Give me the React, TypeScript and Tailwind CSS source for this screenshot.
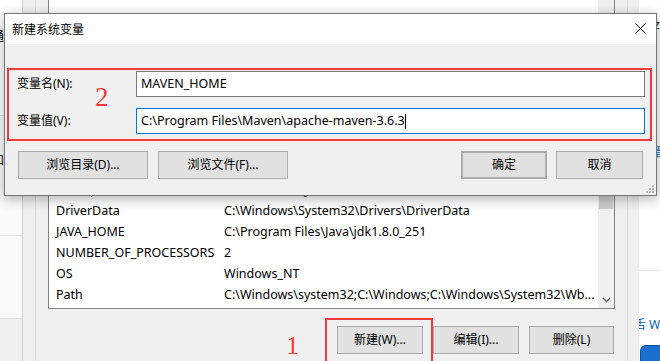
const rows = [
  ['ComSpec', 'C:\\Windows\\system32\\cmd.exe'],
  ['DriverData', 'C:\\Windows\\System32\\Drivers\\DriverData'],
  ['JAVA_HOME', 'C:\\Program Files\\Java\\jdk1.8.0_251'],
  ['NUMBER_OF_PROCESSORS', '2'],
  ['OS', 'Windows_NT'],
  ['Path', 'C:\\Windows\\system32;C:\\Windows;C:\\Windows\\System32\\Wb...'],
]

const font = "font-['Noto_Sans','Noto_Sans_CJK_SC',sans-serif]"

function WinButton({ label, className = '' }: { label: string; className?: string }) {
  return (
    <button
      className={`h-[28px] flex items-center justify-center bg-[#e1e1e1] border border-[#adadad] text-[12px] text-black ${className}`}
    >
      {label}
    </button>
  )
}

function NewVarDialog() {
  return (
    <div className="absolute left-[4px] top-[13px] w-[653px] h-[183px] border border-[#767676] bg-[#f0f0f0] shadow-[0_3px_12px_rgba(0,0,0,0.3)] flex flex-col">
      <div className="h-[30px] bg-white flex items-center justify-between pl-[7px] pr-[10px] pt-[2px]">
        <span className="text-[12px] text-black">新建系统变量</span>
        <svg width="11" height="11" viewBox="0 0 11 11" className="mt-[-3px]">
          <path d="M0.5 0.5 L10.5 10.5 M10.5 0.5 L0.5 10.5" stroke="#000" strokeWidth="1" />
        </svg>
      </div>

      <div className="relative mt-[24px] ml-[2px] w-[645px] h-[73px] border-2 border-[#ef3b3b] pt-[1px] pr-[5px] flex flex-col gap-[11px]">
        <div className="flex items-center">
          <span className="w-[127px] pl-[8px] text-[12px] text-black">变量名(N):</span>
          <div className="flex-1 h-[26px] bg-white border border-[#7a7a7a] flex items-center pl-[4px] text-[12.5px] text-black">
            MAVEN_HOME
          </div>
        </div>
        <div className="flex items-center">
          <span className="w-[127px] pl-[8px] text-[12px] text-black">变量值(V):</span>
          <div className="flex-1 h-[26px] bg-white border border-[#0078d7] flex items-center pl-[4px] text-[12.5px] text-black">
            C:\Program Files\Maven\apache-maven-3.6.3
            <span className="w-px h-[15px] bg-black" />
          </div>
        </div>
        <span className="absolute left-[86px] top-[14px] font-['Liberation_Serif',serif] text-[27px] leading-none text-[#ef3b3b]">
          2
        </span>
      </div>

      <div className="flex items-center mt-[10px] pl-[13px] pr-[13px]">
        <div className="flex gap-[10px]">
          <WinButton label="浏览目录(D)..." className="w-[130px]" />
          <WinButton label="浏览文件(F)..." className="w-[130px]" />
        </div>
        <div className="flex gap-[9px] ml-auto">
          <WinButton label="确定" className="w-[86px] border-2 border-[#0078d7]" />
          <WinButton label="取消" className="w-[87px]" />
        </div>
      </div>

      <div className="absolute right-[2px] bottom-[2px] grid grid-cols-3 gap-[1px]">
        {[0, 0, 1, 0, 1, 1, 1, 1, 1].map((on, i) => (
          <span key={i} className={`w-[2px] h-[2px] ${on ? 'bg-[#b9b9b9]' : ''}`} />
        ))}
      </div>
    </div>
  )
}

export default function App() {
  return (
    <div className={`relative w-[660px] h-[361px] overflow-hidden bg-white flex ${font}`}>
      {/* left edge of window behind */}
      <div className="w-[22px] flex flex-col text-[12px]">
        <div className="h-[116px] bg-white border-b border-[#e3e3e3] overflow-hidden">
          <span className="block mt-[28px] ml-[-8px] text-black">通</span>
        </div>
        <div className="h-[120px] bg-[#fbfbfb] border-b border-[#e3e3e3] overflow-hidden">
          <span className="block mt-[36px] ml-[-8px] text-black">和</span>
        </div>
        <div className="h-[83px] bg-[#f9f9f9] border-b border-[#e3e3e3]" />
        <div className="flex-1 bg-[#f0f0f0]" />
      </div>

      {/* environment variables window */}
      <div className="w-[617px] bg-[#f0f0f0] border-l border-[#d0d0d0] flex">
        <div className="ml-[12px] w-[593px] border-l border-r border-[#dadada] flex flex-col">
          <div className="mx-[12px] h-[309px] bg-white border-l border-r border-b border-[#828282] flex">
            <div className="flex-1 flex flex-col justify-end pb-[2px] overflow-hidden text-[12.5px] text-black">
              {rows.map(([name, value]) => (
                <div key={name} className="h-[21px] flex items-center shrink-0 pl-[7px]">
                  <span className="w-[168px] whitespace-nowrap">{name}</span>
                  <span className="whitespace-nowrap">{value}</span>
                </div>
              ))}
            </div>
            <div className="w-[16px] bg-[#f0f0f0] flex flex-col">
              <div className="h-[150px]" />
              <div className="h-[59px] mx-[1px] bg-[#cdcdcd]" />
              <div className="flex-1" />
              <div className="h-[16px] flex items-center justify-center">
                <svg width="9" height="6" viewBox="0 0 9 6">
                  <path d="M1 1 L4.5 4.5 L8 1" stroke="#606060" strokeWidth="1.3" fill="none" />
                </svg>
              </div>
            </div>
          </div>

          <div className="relative flex justify-end gap-[10px] pr-[13px] mt-[17px]">
            <span className="absolute left-[250px] top-[7px] font-['Liberation_Serif',serif] text-[26px] leading-none text-[#ef3b3b]">
              1
            </span>
            <div className="absolute left-[289px] top-[-8px] w-[108px] h-[60px] border-2 border-[#ef3b3b]" />
            <WinButton label="新建(W)..." className="w-[86px]" />
            <WinButton label="编辑(I)..." className="w-[86px]" />
            <WinButton label="删除(L)" className="w-[85px]" />
          </div>
        </div>
      </div>

      {/* right edge of window behind */}
      <div className="flex-1 flex flex-col text-[12px] overflow-hidden">
        <div className="h-[271px] border-b border-[#e3e3e3] relative">
          <span className="absolute left-[15px] top-[16px] text-black">z</span>
          <span className="absolute left-[15px] top-[144px] text-[#0063b1]">晋</span>
        </div>
        <div className="flex-1 relative">
          <span className="absolute left-[-5px] top-[45px] whitespace-nowrap text-[#0063b1]">舌 W</span>
          <div className="absolute left-[1px] top-[74px] w-[30px] h-[20px] rounded-tl-[6px] bg-[#1a6fd0] border border-[#0b4ea2]" />
        </div>
      </div>

      <NewVarDialog />
    </div>
  )
}
